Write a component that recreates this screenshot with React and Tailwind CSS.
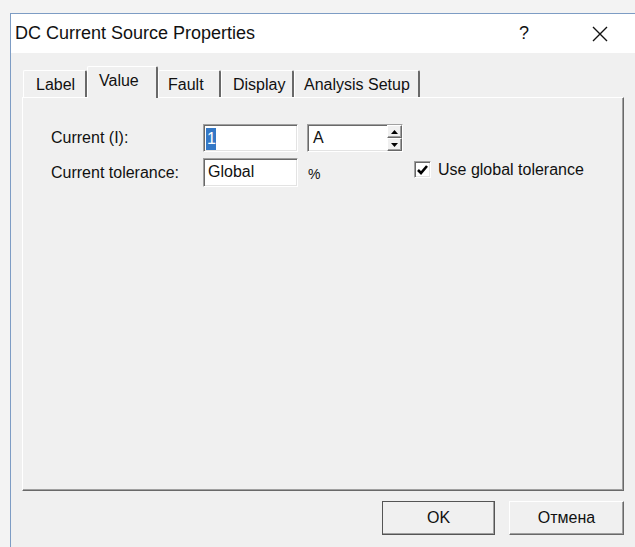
import React from 'react';

const sunken =
  'border border-t-[#a0a0a0] border-l-[#a0a0a0] border-r-white border-b-white shadow-[inset_1px_1px_0_#696969,inset_-1px_-1px_0_#e3e3e3]';
const raised =
  'border border-t-white border-l-white border-r-[#696969] border-b-[#696969] shadow-[inset_-1px_-1px_0_#a0a0a0]';

const tabs = [
  { label: 'Label', w: 'w-[64px]', pl: 'pl-[12px]' },
  { label: 'Value', w: 'w-[71px]', pl: 'pl-[11px]', active: true },
  { label: 'Fault', w: 'w-[63px]', pl: 'pl-[9px]' },
  { label: 'Display', w: 'w-[73px]', pl: 'pl-[11px]' },
  { label: 'Analysis Setup', w: 'w-[126px]', pl: 'pl-[9px]' },
];

const Tab = ({ tab }) =>
  tab.active ? (
    <div
      className={`${tab.w} ${tab.pl} relative z-10 h-[32px] -mb-px bg-[#f0f0f0] border-t border-l border-white border-r-2 border-r-[#696969] rounded-t-[2px] pt-[3px] leading-[22px]`}
    >
      {tab.label}
    </div>
  ) : (
    <div
      className={`${tab.w} ${tab.pl} h-[27px] bg-[#f0f0f0] border-t border-l border-white border-r-2 border-r-[#696969] rounded-t-[2px] pt-[3px] leading-[22px]`}
    >
      {tab.label}
    </div>
  );

const Spinner = () => (
  <div className="flex flex-col w-[15px] h-full">
    <div className={`flex-1 flex items-center justify-center bg-[#f0f0f0] ${raised}`}>
      <svg width="7" height="4" viewBox="0 0 7 4">
        <path d="M0 4 L3.5 0 L7 4 Z" fill="#000" />
      </svg>
    </div>
    <div className={`flex-1 flex items-center justify-center bg-[#f0f0f0] ${raised}`}>
      <svg width="7" height="4" viewBox="0 0 7 4">
        <path d="M0 0 L3.5 4 L7 0 Z" fill="#000" />
      </svg>
    </div>
  </div>
);

const Checkbox = () => (
  <div className={`w-[17px] h-[17px] bg-white flex items-center justify-center ${sunken}`}>
    <svg width="11" height="10" viewBox="0 0 11 10">
      <path d="M1 5 L4 8 L10 1" stroke="#000" strokeWidth="2.6" fill="none" />
    </svg>
  </div>
);

export default function App() {
  return (
    <div className="w-[635px] h-[547px] overflow-hidden bg-[#f3f3f3] pt-[13px] pl-[10px] font-['Liberation_Sans',Arial,sans-serif] text-[#111]">
      <div className="h-full border-t border-l border-[#7d9cc4] flex flex-col">
        {/* title bar */}
        <div className="h-[39px] bg-white flex items-center pl-[4px] text-[18px]">
          <span className="flex-1">DC Current Source Properties</span>
          <span className="w-[20px] text-center mr-[58px]">?</span>
          <svg width="16" height="16" viewBox="0 0 16 16" className="mr-[27px]">
            <path d="M1 1 L15 15 M15 1 L1 15" stroke="#111" strokeWidth="1.4" />
          </svg>
        </div>

        <div className="flex-1 bg-[#f0f0f0] pt-[13px] pl-[11px] text-[16px]">
          <div className="flex items-end h-[31px] pl-[1px]">
            {tabs.map((t) => (
              <Tab key={t.label} tab={t} />
            ))}
          </div>

          <div className="w-[602px] h-[394px] border-t border-l border-white border-r border-b border-r-[#696969] border-b-[#696969] shadow-[inset_-1px_-1px_0_#a0a0a0] pt-[26px] pl-[28px]">
            <div className="flex items-center h-[28px]">
              <span className="w-[152px]">Current (I):</span>
              <div className={`w-[95px] h-[28px] bg-white pl-[2px] pt-[2px] ${sunken}`}>
                <span className="inline-block bg-[#3478c6] text-white w-[10px] leading-[22px] pl-[1px]">1</span>
              </div>
              <div className={`ml-[9px] w-[96px] h-[28px] bg-white flex ${sunken}`}>
                <span className="flex-1 pl-[5px] leading-[25px]">A</span>
                <Spinner />
              </div>
            </div>

            <div className="flex items-center h-[29px] mt-[6px]">
              <span className="w-[152px]">Current tolerance:</span>
              <div className={`w-[95px] h-[29px] bg-white pl-[4px] leading-[26px] ${sunken}`}>Global</div>
              <span className="ml-[10px] w-[106px] text-[14px] mt-[3px]">%</span>
              <div className="flex items-center gap-[7px] -mt-[6px]">
                <Checkbox />
                <span>Use global tolerance</span>
              </div>
            </div>
          </div>

          <div className="flex justify-end gap-[14px] w-[602px] mt-[10px]">
            <button
              className={`w-[113px] h-[34px] bg-[#f0f0f0] outline outline-1 outline-[#555] -outline-offset-1 ${raised}`}
            >
              OK
            </button>
            <button className={`w-[115px] h-[34px] bg-[#f0f0f0] ${raised}`}>Отмена</button>
          </div>
        </div>
      </div>
    </div>
  );
}
